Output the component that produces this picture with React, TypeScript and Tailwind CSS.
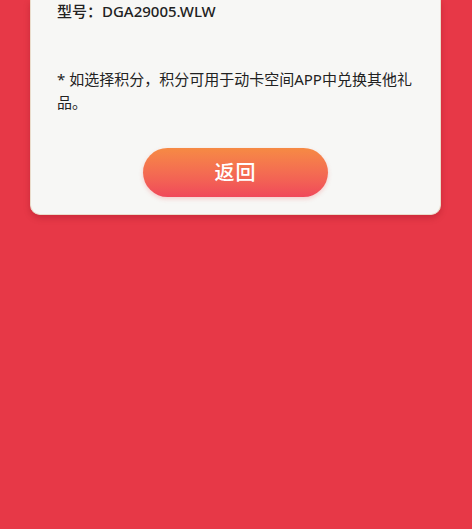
export default function App() {
  return (
    <div
      className="min-h-[529px] w-full bg-[#e73847] px-[30px]"
      style={{ fontFamily: '"Noto Sans", "Noto Sans CJK SC", sans-serif' }}
    >
      <div className="w-[411px] rounded-b-[10px] border border-t-0 border-[#eadccc] bg-[#f7f7f5] px-[26px] pb-[17px] shadow-[0_3px_6px_rgba(120,0,20,0.25)]">
        <p className="text-[15px] leading-[23px] font-medium text-[#222]">型号：DGA29005.WLW</p>
        <p className="mt-[45px] text-[15px] leading-[23px] text-[#222]">
          * 如选择积分，积分可用于动卡空间APP中兑换其他礼品。
        </p>
        <div className="mt-[34px] flex justify-center">
          <button
            type="button"
            className="h-[49px] w-[185px] rounded-full bg-gradient-to-b from-[#f68a44] to-[#f0485a] text-[20px] font-medium tracking-[1px] text-white shadow-[0_2px_4px_rgba(240,80,80,0.25)]"
          >
            返回
          </button>
        </div>
      </div>
    </div>
  );
}
